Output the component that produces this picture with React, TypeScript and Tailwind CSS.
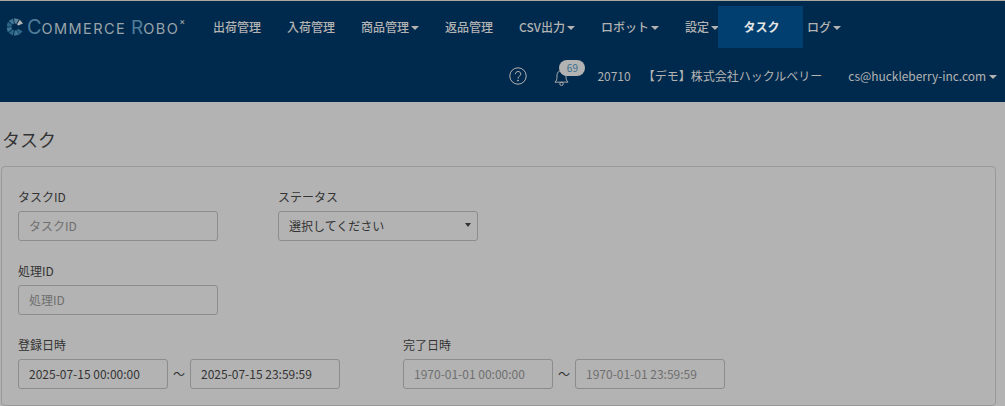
const FONT = "font-['Noto_Sans_CJK_JP','Noto_Sans',sans-serif]";

function Caret({ className = "" }: { className?: string }) {
  return <span className={"inline-block w-0 h-0 border-x-[4px] border-x-transparent border-t-[4px] border-t-[#b3b3b3] " + className} />;
}

function NavItem({ label, caret, className = "" }: { label: string; caret?: boolean; className?: string }) {
  return (
    <div className={"flex items-center h-[42px] text-[12px] font-medium text-[#b3b3b3] whitespace-nowrap " + className}>
      {label}
      {caret && <Caret className="ml-[2px] mt-[2px]" />}
    </div>
  );
}

function Logo() {
  const blades = [50, 10, -30, -70, -110, -150, 170, 135];
  return (
    <div className="flex items-center w-[213px] h-[42px] pl-[7px] shrink-0">
      <svg width="16" height="18" viewBox="-8 -9 16 18" className="shrink-0">
        {blades.map((a, i) => (
          <path
            key={a}
            d="M-0.9 -3.4 L0.9 -3.4 L2.5 -8.4 L-2.5 -8.4 Z"
            fill={i === 0 ? "#b3b3b3" : i === 1 ? "#5d8199" : i % 2 ? "#2e6485" : "#3f7594"}
            transform={`rotate(${a})`}
          />
        ))}
      </svg>
      <div className="flex items-baseline ml-[4px] font-['Inter',sans-serif] font-normal text-[#9aa3a9] leading-none">
        <span className="text-[20px] text-[#4f7c99]">C</span>
        <span className="text-[14.5px] tracking-[1.4px]">OMMERCE</span>
        <span className="text-[19px] text-[#4f7c99] ml-[5px]">R</span>
        <span className="text-[14.5px] tracking-[1.4px]">OBO</span>
        <span className="text-[9px] relative -top-[9px] text-[#b3b3b3]">×</span>
      </div>
    </div>
  );
}

function Field({ label, value, placeholder, width, className = "" }: { label: string; value?: string; placeholder?: string; width: string; className?: string }) {
  return (
    <div className={className}>
      <div className="text-[12px] leading-[14px] text-[#333] mb-[7px]">{label}</div>
      <Box value={value} placeholder={placeholder} width={width} />
    </div>
  );
}

function Box({ value, placeholder, width }: { value?: string; placeholder?: string; width: string }) {
  return (
    <div className={`h-[30px] ${width} border border-[#8c8c8c] rounded-[3px] pl-[10px] flex items-center text-[12px] ${value ? "text-[#333]" : "text-[#6f6f6f]"}`}>
      {value ?? placeholder}
    </div>
  );
}

function Range({ label, from, to, muted, className = "" }: { label: string; from: string; to: string; muted?: boolean; className?: string }) {
  const color = muted ? "text-[#6f6f6f]" : "text-[#333]";
  const b = `h-[30px] w-[150px] border border-[#8c8c8c] rounded-[3px] pl-[10px] flex items-center text-[12px] ${color}`;
  return (
    <div className={className}>
      <div className="text-[12px] leading-[14px] text-[#333] mb-[7px]">{label}</div>
      <div className="flex items-center">
        <div className={b}>{from}</div>
        <div className="w-[22px] text-center text-[12px] text-[#333]">〜</div>
        <div className={b}>{to}</div>
      </div>
    </div>
  );
}

export default function App() {
  return (
    <div className={`w-[1005px] h-[406px] overflow-hidden bg-[#b3b3b3] ${FONT}`}>
      <header className="h-[102px] bg-[#002a4d] border-t border-[#a9a9a0]">
        <div className="flex items-start pt-[5px] h-[47px]">
          <Logo />
          <NavItem label="出荷管理" />
          <NavItem label="入荷管理" className="ml-[26px]" />
          <NavItem label="商品管理" caret className="ml-[26px]" />
          <NavItem label="返品管理" className="ml-[26px]" />
          <NavItem label="CSV出力" caret className="ml-[26px]" />
          <NavItem label="ロボット" caret className="ml-[26px]" />
          <NavItem label="設定" caret className="ml-[26px]" />
          <div className="flex items-center justify-center w-[85px] h-[42px] -ml-[1px] pl-[2px] bg-[#003f6f] text-[12px] font-bold text-[#e6e6e6]">タスク</div>
          <NavItem label="ログ" caret className="ml-[4px]" />
        </div>
        <div className="flex items-center justify-end h-[54px] pt-[2px] pr-[8px] text-[12px] text-[#b3b3b3] font-normal">
          <svg width="18" height="18" viewBox="0 0 18 18" fill="none" stroke="#b3b3b3" strokeWidth="1">
            <circle cx="9" cy="9" r="8.2" />
            <path d="M6.4 7.2c0-1.6 1.2-2.7 2.7-2.7s2.7 1 2.7 2.4c0 1.1-.6 1.7-1.5 2.3-.8.6-1.2 1.1-1.2 2v.5" />
            <circle cx="9" cy="13.6" r=".5" fill="#b3b3b3" />
          </svg>
          <div className="relative w-[15px] h-[20px] ml-[27px] mt-[2px]">
            <svg width="15" height="20" viewBox="0 0 16 20" fill="none" stroke="#b3b3b3" strokeWidth="1">
              <path d="M1 15.5c1.6-1.4 2.2-3 2.2-5.5V8c0-2.8 2-4.8 4.8-4.8s4.8 2 4.8 4.8v2c0 2.5.6 4.1 2.2 5.5Z" />
              <circle cx="8" cy="17.3" r="1.8" />
            </svg>
            <div className="absolute left-[5px] -top-[7px] w-[26px] h-[16px] rounded-full bg-[#b3b3b3] text-[#3a6f90] text-[10px] font-normal leading-[15px] text-center">69</div>
          </div>
          <span className="ml-[28px]">20710</span>
          <span className="ml-[12px] whitespace-nowrap">【デモ】株式会社ハックルベリー</span>
          <span className="ml-[26px] tracking-[-0.05px]">cs@huckleberry-inc.com</span>
          <Caret className="ml-[3px] mt-[2px]" />
        </div>
      </header>
      <main>
        <h1 className="pl-[2px] pt-[24px] h-[64px] text-[18px] leading-[26px] font-normal text-[#333]">タスク</h1>
        <section className="ml-[1px] w-[995px] h-[240px] border border-[#999] rounded-[4px] pl-[16px] pt-[23px]">
          <div className="flex">
            <Field label="タスクID" placeholder="タスクID" width="w-[200px]" />
            <div className="ml-[60px]">
              <div className="text-[12px] leading-[14px] text-[#333] mb-[7px]">ステータス</div>
              <div className="relative h-[30px] w-[200px] border border-[#8c8c8c] rounded-[3px] pl-[10px] flex items-center text-[12px] text-[#333]">
                選択してください
                <span className="absolute right-[6px] top-[11px] w-0 h-0 border-x-[3.5px] border-x-transparent border-t-[4px] border-t-[#333]" />
              </div>
            </div>
          </div>
          <Field label="処理ID" placeholder="処理ID" width="w-[200px]" className="mt-[23px]" />
          <div className="flex mt-[23px]">
            <Range label="登録日時" from="2025-07-15 00:00:00" to="2025-07-15 23:59:59" />
            <Range label="完了日時" from="1970-01-01 00:00:00" to="1970-01-01 23:59:59" muted className="ml-[63px]" />
          </div>
        </section>
      </main>
    </div>
  );
}
